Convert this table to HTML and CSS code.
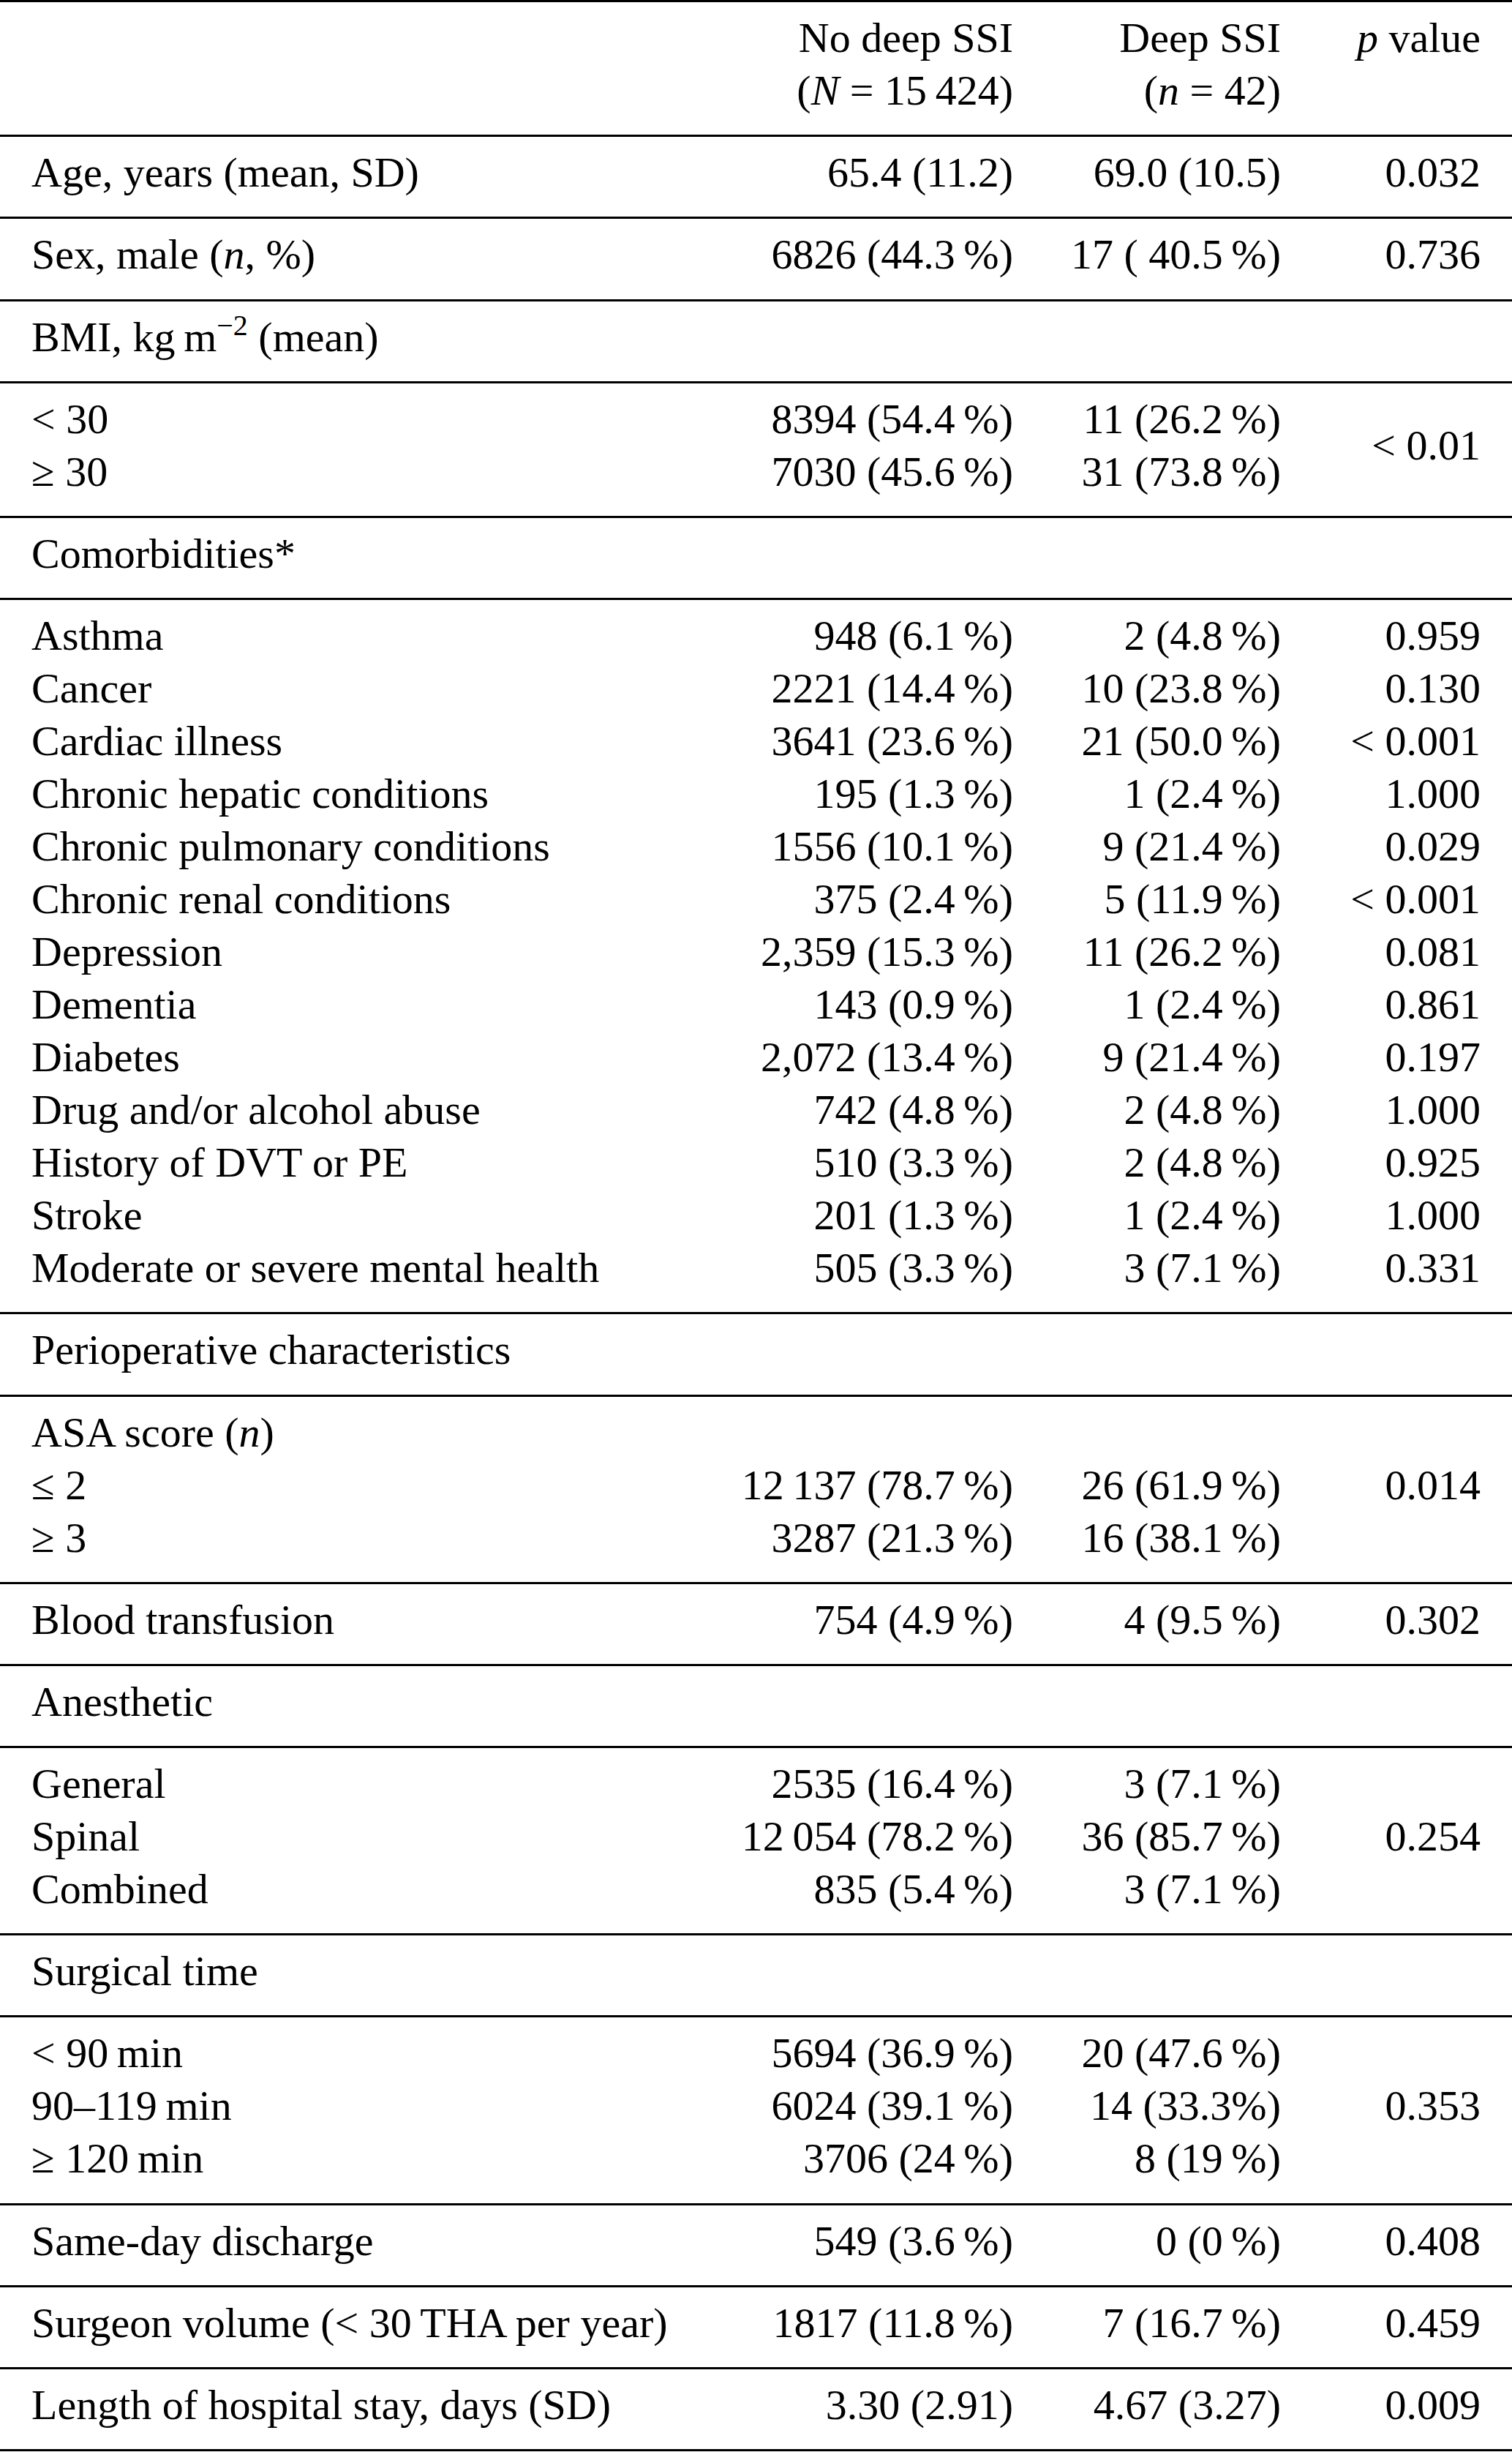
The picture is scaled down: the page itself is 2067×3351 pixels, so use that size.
FILE: index.html
```html
<!DOCTYPE html>
<html lang="en">
<head>
<meta charset="utf-8">
<title>Table</title>
<link rel="stylesheet" href="styles.css">
</head>
<body>
<div class="tbl">
  <div class="row">
    <div class="lab"></div>
    <div class="num"><div>No deep SSI</div><div>(<i>N</i> = 15&thinsp;424)</div></div>
    <div class="num"><div>Deep SSI</div><div>(<i>n</i> = 42)</div></div>
    <div class="pv"><div><i>p</i> value</div></div>
  </div>
  <div class="row">
    <div class="lab">Age, years (mean, SD)</div>
    <div class="num">65.4 (11.2)</div>
    <div class="num">69.0 (10.5)</div>
    <div class="pv">0.032</div>
  </div>
  <div class="row">
    <div class="lab">Sex, male (<i>n</i>, %)</div>
    <div class="num">6826 (44.3&thinsp;%)</div>
    <div class="num">17 ( 40.5&thinsp;%)</div>
    <div class="pv">0.736</div>
  </div>
  <div class="row">
    <div class="lab">BMI, kg&thinsp;m<sup>−2</sup> (mean)</div>
    <div class="num"></div>
    <div class="num"></div>
    <div class="pv"></div>
  </div>
  <div class="row">
    <div class="lab"><div>&lt; 30</div><div>≥ 30</div></div>
    <div class="num"><div>8394 (54.4&thinsp;%)</div><div>7030 (45.6&thinsp;%)</div></div>
    <div class="num"><div>11 (26.2&thinsp;%)</div><div>31 (73.8&thinsp;%)</div></div>
    <div class="pv mid">&lt; 0.01</div>
  </div>
  <div class="row">
    <div class="lab">Comorbidities*</div>
    <div class="num"></div>
    <div class="num"></div>
    <div class="pv"></div>
  </div>
  <div class="row">
    <div class="lab">
      <div>Asthma</div>
      <div>Cancer</div>
      <div>Cardiac illness</div>
      <div>Chronic hepatic conditions</div>
      <div>Chronic pulmonary conditions</div>
      <div>Chronic renal conditions</div>
      <div>Depression</div>
      <div>Dementia</div>
      <div>Diabetes</div>
      <div>Drug and/or alcohol abuse</div>
      <div>History of DVT or PE</div>
      <div>Stroke</div>
      <div>Moderate or severe mental health</div>
    </div>
    <div class="num">
      <div>948 (6.1&thinsp;%)</div>
      <div>2221 (14.4&thinsp;%)</div>
      <div>3641 (23.6&thinsp;%)</div>
      <div>195 (1.3&thinsp;%)</div>
      <div>1556 (10.1&thinsp;%)</div>
      <div>375 (2.4&thinsp;%)</div>
      <div>2,359 (15.3&thinsp;%)</div>
      <div>143 (0.9&thinsp;%)</div>
      <div>2,072 (13.4&thinsp;%)</div>
      <div>742 (4.8&thinsp;%)</div>
      <div>510 (3.3&thinsp;%)</div>
      <div>201 (1.3&thinsp;%)</div>
      <div>505 (3.3&thinsp;%)</div>
    </div>
    <div class="num">
      <div>2 (4.8&thinsp;%)</div>
      <div>10 (23.8&thinsp;%)</div>
      <div>21 (50.0&thinsp;%)</div>
      <div>1 (2.4&thinsp;%)</div>
      <div>9 (21.4&thinsp;%)</div>
      <div>5 (11.9&thinsp;%)</div>
      <div>11 (26.2&thinsp;%)</div>
      <div>1 (2.4&thinsp;%)</div>
      <div>9 (21.4&thinsp;%)</div>
      <div>2 (4.8&thinsp;%)</div>
      <div>2 (4.8&thinsp;%)</div>
      <div>1 (2.4&thinsp;%)</div>
      <div>3 (7.1&thinsp;%)</div>
    </div>
    <div class="pv">
      <div>0.959</div>
      <div>0.130</div>
      <div>&lt; 0.001</div>
      <div>1.000</div>
      <div>0.029</div>
      <div>&lt; 0.001</div>
      <div>0.081</div>
      <div>0.861</div>
      <div>0.197</div>
      <div>1.000</div>
      <div>0.925</div>
      <div>1.000</div>
      <div>0.331</div>
    </div>
  </div>
  <div class="row">
    <div class="lab">Perioperative characteristics</div>
    <div class="num"></div>
    <div class="num"></div>
    <div class="pv"></div>
  </div>
  <div class="row">
    <div class="lab"><div>ASA score (<i>n</i>)</div><div>≤ 2</div><div>≥ 3</div></div>
    <div class="num"><div>&nbsp;</div><div>12&thinsp;137 (78.7&thinsp;%)</div><div>3287 (21.3&thinsp;%)</div></div>
    <div class="num"><div>&nbsp;</div><div>26 (61.9&thinsp;%)</div><div>16 (38.1&thinsp;%)</div></div>
    <div class="pv mid">0.014</div>
  </div>
  <div class="row">
    <div class="lab">Blood transfusion</div>
    <div class="num">754 (4.9&thinsp;%)</div>
    <div class="num">4 (9.5&thinsp;%)</div>
    <div class="pv">0.302</div>
  </div>
  <div class="row">
    <div class="lab">Anesthetic</div>
    <div class="num"></div>
    <div class="num"></div>
    <div class="pv"></div>
  </div>
  <div class="row">
    <div class="lab"><div>General</div><div>Spinal</div><div>Combined</div></div>
    <div class="num"><div>2535 (16.4&thinsp;%)</div><div>12&thinsp;054 (78.2&thinsp;%)</div><div>835 (5.4&thinsp;%)</div></div>
    <div class="num"><div>3 (7.1&thinsp;%)</div><div>36 (85.7&thinsp;%)</div><div>3 (7.1&thinsp;%)</div></div>
    <div class="pv mid">0.254</div>
  </div>
  <div class="row">
    <div class="lab">Surgical time</div>
    <div class="num"></div>
    <div class="num"></div>
    <div class="pv"></div>
  </div>
  <div class="row">
    <div class="lab"><div>&lt; 90&thinsp;min</div><div>90–119&thinsp;min</div><div>≥ 120&thinsp;min</div></div>
    <div class="num"><div>5694 (36.9&thinsp;%)</div><div>6024 (39.1&thinsp;%)</div><div>3706 (24&thinsp;%)</div></div>
    <div class="num"><div>20 (47.6&thinsp;%)</div><div>14 (33.3%)</div><div>8 (19&thinsp;%)</div></div>
    <div class="pv mid">0.353</div>
  </div>
  <div class="row">
    <div class="lab">Same-day discharge</div>
    <div class="num">549 (3.6&thinsp;%)</div>
    <div class="num">0 (0&thinsp;%)</div>
    <div class="pv">0.408</div>
  </div>
  <div class="row">
    <div class="lab">Surgeon volume (&lt; 30&thinsp;THA per year)</div>
    <div class="num">1817 (11.8&thinsp;%)</div>
    <div class="num">7 (16.7&thinsp;%)</div>
    <div class="pv">0.459</div>
  </div>
  <div class="row">
    <div class="lab">Length of hospital stay, days (SD)</div>
    <div class="num">3.30 (2.91)</div>
    <div class="num">4.67 (3.27)</div>
    <div class="pv">0.009</div>
  </div>
</div>
</body>
</html>
```

FILE: styles.css
```css
html, body {
  margin: 0;
  padding: 0;
  background: #ffffff;
}

body {
  font-family: "Liberation Serif", "Times New Roman", serif;
  font-size: 58px;
  line-height: 72px;
  color: #000000;
}

.tbl {
  width: 2067px;
  border-top: 3px solid #000000;
}

.row {
  display: grid;
  grid-template-columns: 1000px 385px 366px 316px;
  padding: 13px 0 24.2px 0;
  border-bottom: 3px solid #000000;
}

.lab {
  padding-left: 43px;
  white-space: nowrap;
}

.num {
  text-align: right;
  white-space: nowrap;
}

.pv {
  text-align: right;
  padding-right: 43px;
  white-space: nowrap;
}

.mid {
  align-self: center;
}

sup {
  font-size: 40px;
  line-height: 0;
  vertical-align: 22px;
}

i {
  font-style: italic;
}
```
